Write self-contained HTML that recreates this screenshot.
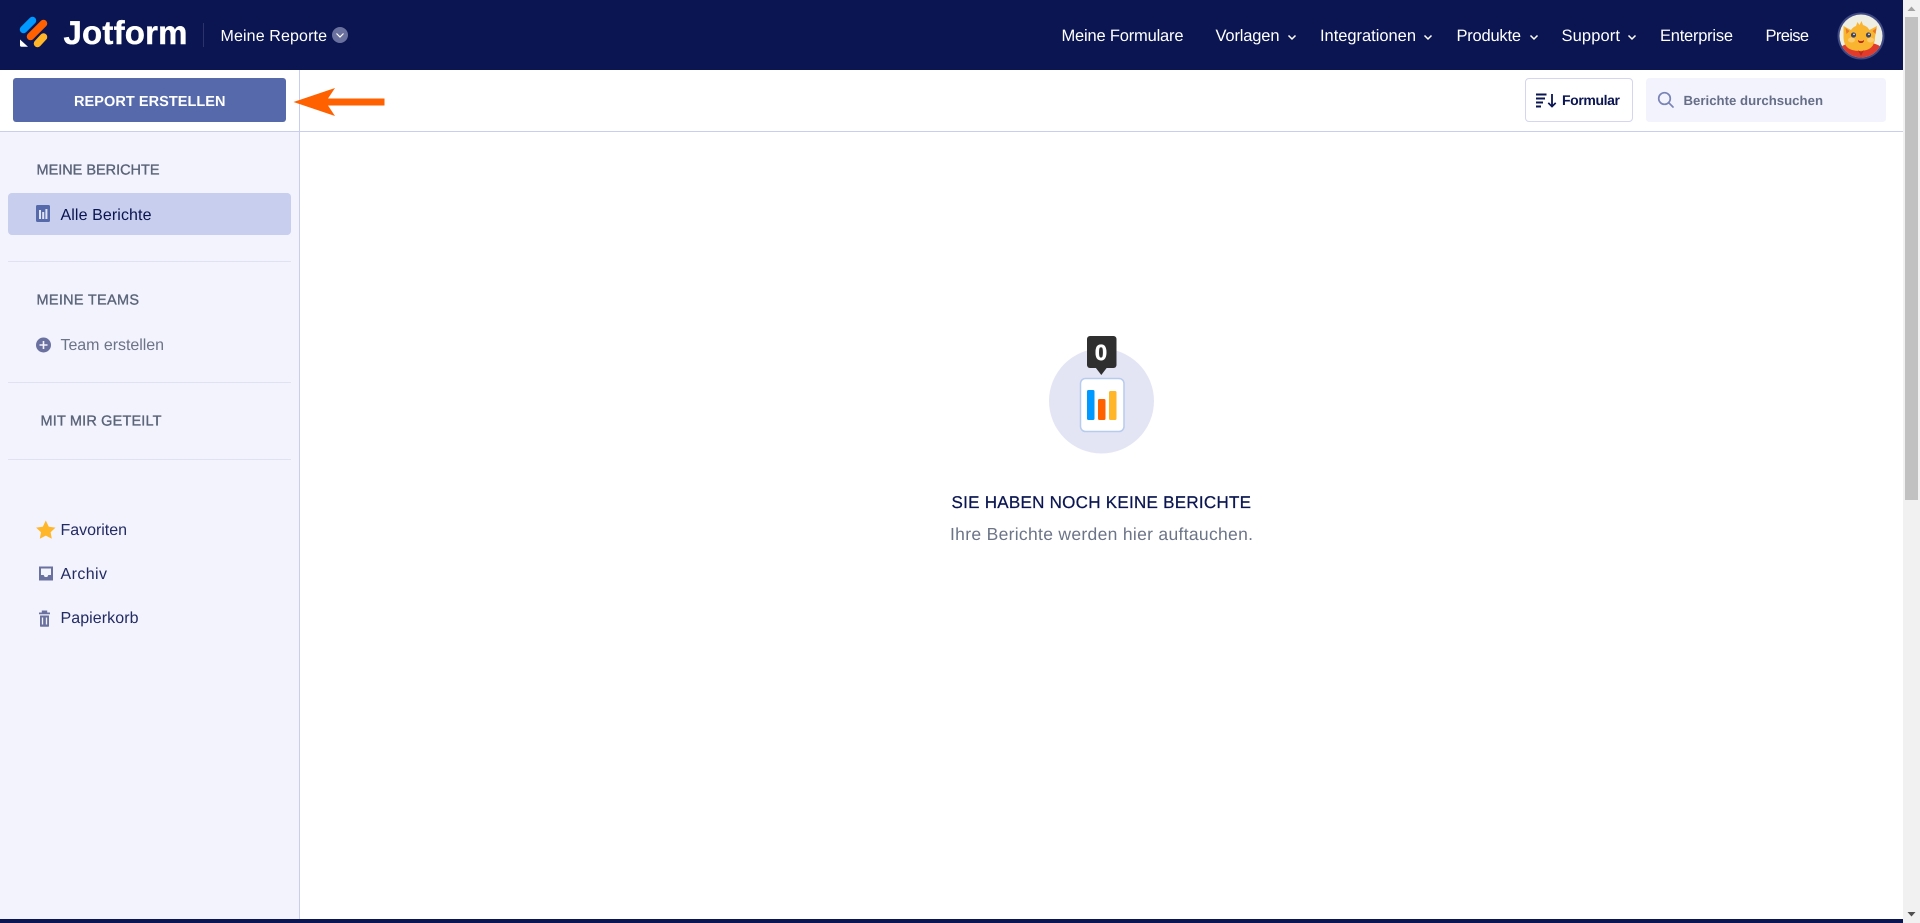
<!DOCTYPE html>
<html lang="de">
<head>
<meta charset="utf-8">
<title>Meine Reporte</title>
<style>
html,body{margin:0;padding:0;width:1920px;height:923px;overflow:hidden;background:#fff}
svg{display:block;position:absolute;left:0;top:0}
text{font-family:"Liberation Sans",sans-serif;text-rendering:geometricPrecision}
</style>
</head>
<body>
<svg width="1920" height="923" viewBox="0 0 1920 923" xmlns="http://www.w3.org/2000/svg">
<!-- backgrounds -->
<rect width="1920" height="923" fill="#fff"/>
<rect x="0" y="131" width="299" height="792" fill="#f3f3fe"/>
<rect x="299" y="70" width="1" height="853" fill="#c8ceed"/>
<rect x="0" y="131" width="1903" height="1" fill="#c8ceed"/>
<rect x="0" y="0" width="1903" height="70" fill="#0a1551"/>
<rect x="0" y="919" width="1903" height="4" fill="#0a1551"/>

<!-- scrollbar -->
<rect x="1903" y="0" width="17" height="923" fill="#f1f1f1"/>
<rect x="1905" y="17" width="13" height="483" fill="#c1c1c1"/>
<path d="M1911.500 6.500l4 4.500h-8z" fill="#a3a3a3"/>
<path d="M1907.500 912h8l-4 4.500z" fill="#505050"/>

<!-- logo -->
<path d="M23.500 29.500L32.500 20.500" stroke="#0099ff" stroke-width="7.500" stroke-linecap="round"/>
<path d="M30.500 36.500L43.500 23.500" stroke="#ff6100" stroke-width="7.500" stroke-linecap="round"/>
<path d="M37.500 43.500L43.500 37" stroke="#ffb629" stroke-width="7.500" stroke-linecap="round"/>
<path d="M20 39.500L28 46.800H21.500Q20 46.800 20 45.300z" fill="#fff"/>
<text x="63.500" y="44" font-size="33" font-weight="700" fill="#fff" stroke="#fff" stroke-width=".4" textLength="124">Jotform</text>
<rect x="203" y="23" width="1" height="24" fill="#2a346b"/>
<text x="220.500" y="41" font-size="16" fill="#fff" textLength="106.500">Meine Reporte</text>
<circle cx="340" cy="35" r="8" fill="#6a719e"/>
<path d="M336.500 33.500l3.500 3.500 3.500-3.500" fill="none" stroke="#fff" stroke-width="1.200"/>

<!-- nav -->
<g font-size="16.500" fill="#fff">
<text x="1061.500" y="41" textLength="122">Meine Formulare</text>
<text x="1215.500" y="41" textLength="64">Vorlagen</text>
<text x="1320" y="41" textLength="96">Integrationen</text>
<text x="1456.500" y="41" textLength="64.500">Produkte</text>
<text x="1561.500" y="41" textLength="58.500">Support</text>
<text x="1660" y="41" textLength="73">Enterprise</text>
<text x="1765.500" y="41" textLength="43.500">Preise</text>
</g>
<g fill="none" stroke="#fff" stroke-width="1.500">
<path d="M1288.500 35.500l3.500 3.500 3.500-3.500"/>
<path d="M1424.500 35.500l3.500 3.500 3.500-3.500"/>
<path d="M1530.500 35.500l3.500 3.500 3.500-3.500"/>
<path d="M1628.500 35.500l3.500 3.500 3.500-3.500"/>
</g>

<!-- avatar -->
<circle cx="1861" cy="36" r="23.500" fill="#3f4a85"/>
<circle cx="1861" cy="36" r="21.500" fill="#eeeee2"/>
<clipPath id="av"><circle cx="1861" cy="36" r="21.500"/></clipPath>
<g clip-path="url(#av)">
<path d="M1841 47q5-4 12-4h16q7 0 12 4v14h-40z" fill="#e23b2c"/>
<path d="M1843.500 26l7.500 4q2-3 5-4l1.500-4 2 3 2-4 1.500 4q4 1 6.500 5l7.500-4-2 11q0 14-15.500 14t-16-13z" fill="#f9b52f"/>
<path d="M1845.500 28l4 3-3 3zM1876.500 28l-4 3 3 3z" fill="#e8782a"/>
<ellipse cx="1851.500" cy="40" rx="3.500" ry="2.500" fill="#fbcb6e"/>
<ellipse cx="1870.500" cy="40" rx="3.500" ry="2.500" fill="#fbcb6e"/>
<circle cx="1853.500" cy="35" r="2.600" fill="#3e4660"/>
<circle cx="1868.500" cy="35" r="2.600" fill="#3e4660"/>
<circle cx="1854" cy="34.300" r=".8" fill="#fff"/>
<circle cx="1869" cy="34.300" r=".8" fill="#fff"/>
<path d="M1858 40q3 2.500 6 0q0 3-3 3t-3-3z" fill="#b5211f"/>
<path d="M1858 50l3 2.500 3-2.500-3 6z" fill="#b92a20"/>
</g>

<!-- create button + arrow -->
<rect x="13" y="78" width="273" height="44" rx="3" fill="#566aab"/>
<text x="74" y="106" font-size="14.500" font-weight="700" fill="#fff" textLength="151.500">REPORT ERSTELLEN</text>
<path d="M293.500 102L335 88L328 98.500H384.500V105.500H328L335 116z" fill="#ff6100"/>

<!-- sort button -->
<rect x="1525.500" y="78.500" width="107" height="43" rx="3.500" fill="#fff" stroke="#d3d6ec"/>
<g fill="#0a1551">
<rect x="1536" y="93.500" width="10.500" height="2"/>
<rect x="1536" y="97.500" width="9" height="2"/>
<rect x="1536" y="101.500" width="7" height="2"/>
<rect x="1536" y="105.500" width="5" height="2"/>
<path d="M1551.100 94h1.800v10.500l2.200-2.200 1.200 1.200-4.300 4.300-4.300-4.300 1.200-1.200 2.200 2.200z"/>
</g>
<text x="1562" y="105" font-size="14" font-weight="700" fill="#0a1551" textLength="58">Formular</text>

<!-- search -->
<rect x="1646" y="78" width="240" height="44" rx="3.500" fill="#f3f3fe"/>
<circle cx="1664.500" cy="98.500" r="5.800" fill="none" stroke="#7a83b6" stroke-width="1.700"/>
<path d="M1668.700 102.700l4.300 4.300" stroke="#7a83b6" stroke-width="1.700" stroke-linecap="round"/>
<text x="1683.500" y="105" font-size="13.200" font-weight="700" fill="#666f87" textLength="139.500">Berichte durchsuchen</text>

<!-- sidebar -->
<g font-size="14.500" fill="#5a6478" stroke="#5a6478" stroke-width=".35">
<text x="36.500" y="174.500" textLength="123">MEINE BERICHTE</text>
<text x="36.500" y="304.500" textLength="102.500">MEINE TEAMS</text>
<text x="40.500" y="425.500" textLength="121">MIT MIR GETEILT</text>
</g>
<rect x="8" y="193" width="283" height="42" rx="4" fill="#c8ceed"/>
<rect x="36" y="205" width="14" height="17" rx="1.500" fill="#566aab"/>
<g fill="#dfe3f5">
<rect x="39" y="210" width="2" height="9"/>
<rect x="42.200" y="212" width="2" height="7"/>
<rect x="45.400" y="209" width="2" height="10"/>
</g>
<text x="60.500" y="220" font-size="16" fill="#0a1551" textLength="91">Alle Berichte</text>

<rect x="8" y="261" width="283" height="1" fill="#e0e2f2"/>
<rect x="8" y="382" width="283" height="1" fill="#e0e2f2"/>
<rect x="8" y="459" width="283" height="1" fill="#e0e2f2"/>

<circle cx="43.500" cy="345" r="7.500" fill="#6a719e"/>
<path d="M39.500 345h8M43.500 341v8" stroke="#f3f3fe" stroke-width="1.600"/>
<text x="60.500" y="350" font-size="16" fill="#6c7488" textLength="103.500">Team erstellen</text>

<path d="M45.800 520.500l3 6.200 6.700.9-4.900 4.600 1.200 6.600-6-3.200-6 3.200 1.200-6.600-4.900-4.600 6.700-.9z" fill="#ffb629"/>
<text x="60.500" y="535" font-size="16" fill="#232b63" textLength="66.500">Favoriten</text>

<path d="M39 566.500h14v14h-14z" fill="#6a719e"/>
<path d="M41 568.500h10v6.500h-2.700l-1 2h-2.600l-1-2H41z" fill="#f3f3fe"/>
<text x="60.500" y="579" font-size="16" fill="#232b63" textLength="46.500">Archiv</text>

<path d="M39 612.500h2.800v-2h5.400v2H50v1.800H39z" fill="#6a719e"/>
<path d="M40 615.500h9V626q0 .8-.8.8h-7.400q-.8 0-.8-.8z" fill="#6a719e"/>
<path d="M42.500 617.500v7M46.500 617.500v7" stroke="#f3f3fe" stroke-width="1.300"/>
<text x="60.500" y="623" font-size="16" fill="#232b63" textLength="78">Papierkorb</text>

<!-- empty state -->
<circle cx="1101.500" cy="401" r="52.500" fill="#e3e5f5"/>
<rect x="1080.500" y="378.500" width="43.500" height="53" rx="5" fill="#fff" stroke="#b7cbee" stroke-width="1.500"/>
<rect x="1087" y="390" width="7.500" height="30" rx="1.500" fill="#0099ff"/>
<rect x="1098" y="399" width="7.500" height="21" rx="1.500" fill="#ff6100"/>
<rect x="1109" y="391" width="7.500" height="29" rx="1.500" fill="#ffb629"/>
<rect x="1087" y="336" width="29.500" height="32" rx="3" fill="#2f2f2f"/>
<path d="M1095.500 367.500h11.500l-5.700 7.500z" fill="#2f2f2f"/>
<text x="1101" y="360" font-size="22" font-weight="700" fill="#fff" stroke="#fff" stroke-width=".5" text-anchor="middle">0</text>

<text x="951.500" y="508" font-size="17" fill="#0a1551" stroke="#0a1551" stroke-width=".25" textLength="299.500">SIE HABEN NOCH KEINE BERICHTE</text>
<text x="950" y="540" font-size="17.500" fill="#6c7488" textLength="303">Ihre Berichte werden hier auftauchen.</text>
</svg>
</body>
</html>
